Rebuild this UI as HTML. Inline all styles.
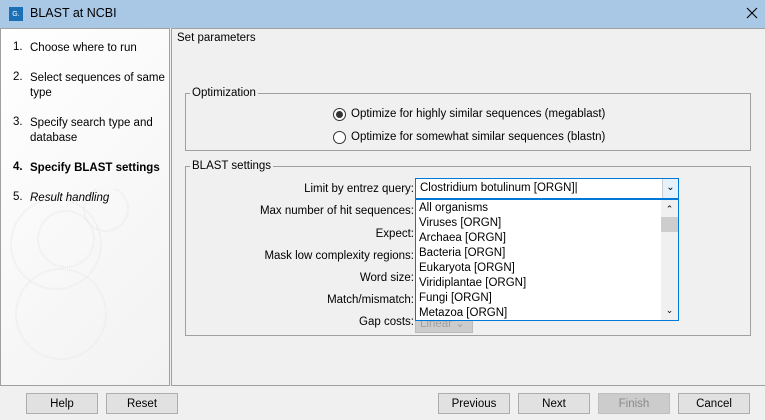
<!DOCTYPE html>
<html><head><style>
*{box-sizing:border-box;margin:0;padding:0}
body{width:765px;height:420px;background:#f0f0f0;font-family:"Liberation Sans","DejaVu Sans",sans-serif;font-size:11.5px;color:#000;position:relative;overflow:hidden}
.a{position:absolute}
.title{left:0;top:0;width:765px;height:28px;background:#a8c8e6}
.left{left:0;top:28px;width:170px;height:358px;border:1px solid #a0a0a0;background:linear-gradient(135deg,#fff,#f2f2f2)}
.right{left:171px;top:28px;width:594px;height:358px;border-left:1px solid #a0a0a0;border-top:1px solid #a0a0a0;border-bottom:1px solid #a0a0a0}
.step{position:absolute;left:12px}
.step span{position:absolute;left:17px;width:140px;line-height:15px}
.grp{border:1px solid #a0a0a0}
.leg{background:#f0f0f0;padding:0 2px}
.btn{top:393px;width:72px;height:21px;border:1px solid #adadad;background:#e1e1e1;text-align:center;line-height:21px}
.lbl{right:351px;text-align:right;white-space:nowrap}
.radio{width:13px;height:13px;border:1px solid #333;border-radius:50%;background:#fff}
</style></head><body>
<div class="a title">
 <div class="a" style="left:9px;top:7px;width:14px;height:14px;background:#1a6fb5;color:#fff;font-size:7px;line-height:16px;text-align:center">G.</div>
 <div class="a" style="left:30px;top:6px;font-size:12.5px">BLAST at NCBI</div>
 <svg class="a" style="left:746px;top:7px" width="12" height="12"><path d="M1 1L11 11M11 1L1 11" stroke="#000" stroke-width="1.1"/></svg>
</div>
<div class="a left">
 <svg class="a" style="left:0;top:160px" width="170" height="200" viewBox="0 0 170 200" fill="none" stroke="#ebebeb" stroke-width="2" stroke-dasharray="1 1"><circle cx="55" cy="55" r="45"/><circle cx="65" cy="50" r="28"/><circle cx="60" cy="125" r="45"/><circle cx="105" cy="20" r="22"/></svg>
 <div class="step" style="top:12px">1.<span style="top:0">Choose where to run</span></div>
 <div class="step" style="top:42px">2.<span style="top:0">Select sequences of same type</span></div>
 <div class="step" style="top:87px">3.<span style="top:0">Specify search type and database</span></div>
 <div class="step" style="top:132px;font-weight:bold">4.<span style="top:0">Specify BLAST settings</span></div>
 <div class="step" style="top:162px">5.<span style="top:0;font-style:italic">Result handling</span></div>
</div>
<div class="a right"></div>
<div class="a" style="left:177px;top:32px">Set parameters</div>
<div class="a grp" style="left:185px;top:93px;width:566px;height:58px"></div>
<div class="a leg" style="left:190px;top:87px">Optimization</div>
<div class="a radio" style="left:333px;top:108px"><div class="a" style="left:2px;top:2px;width:7px;height:7px;border-radius:50%;background:#333"></div></div>
<div class="a" style="left:351px;top:108px">Optimize for highly similar sequences (megablast)</div>
<div class="a radio" style="left:333px;top:131px"></div>
<div class="a" style="left:351px;top:131px">Optimize for somewhat similar sequences (blastn)</div>
<div class="a grp" style="left:185px;top:166px;width:566px;height:170px"></div>
<div class="a leg" style="left:190px;top:160px">BLAST settings</div>
<div class="a lbl" style="top:183px">Limit by entrez query:</div>
<div class="a lbl" style="top:205px">Max number of hit sequences:</div>
<div class="a lbl" style="top:228px">Expect:</div>
<div class="a lbl" style="top:250px">Mask low complexity regions:</div>
<div class="a lbl" style="top:272px">Word size:</div>
<div class="a lbl" style="top:294px">Match/mismatch:</div>
<div class="a lbl" style="top:316px">Gap costs:</div>
<div class="a" style="left:415px;top:315px;width:58px;height:18px;background:#ccc;border:1px solid #bbb;color:#a0a0a0;padding-left:4px;line-height:16px">Linear ⌄</div>
<div class="a" style="left:415px;top:178px;width:264px;height:21px;border:1px solid #0078d7;background:#fff;padding-left:4px;line-height:19px">Clostridium botulinum [ORGN]|
 <div class="a" style="right:0;top:0;width:16px;height:19px;border-left:1px solid #ccc;background:#e5f1fb;text-align:center;line-height:17px;font-size:10px">⌄</div></div>
<div class="a" style="left:415px;top:199px;width:264px;height:122px;border:1px solid #0078d7;background:#fff;line-height:15px;padding:1px 0 0 3px">
 All organisms<br>Viruses [ORGN]<br>Archaea [ORGN]<br>Bacteria [ORGN]<br>Eukaryota [ORGN]<br>Viridiplantae [ORGN]<br>Fungi [ORGN]<br>Metazoa [ORGN]
 <div class="a" style="right:0;top:0;width:17px;height:120px;background:#f0f0f0"><div class="a" style="left:0;top:2px;width:17px;text-align:center;font-size:9px">⌃</div><div class="a" style="left:0;top:17px;width:17px;height:15px;background:#cdcdcd"></div><div class="a" style="left:0;bottom:2px;width:17px;text-align:center;font-size:9px">⌄</div></div>
</div>
<div class="a btn" style="left:26px">Help</div>
<div class="a btn" style="left:106px">Reset</div>
<div class="a btn" style="left:438px">Previous</div>
<div class="a btn" style="left:518px">Next</div>
<div class="a btn" style="left:598px;background:#ccc;border-color:#bfbfbf;color:#8a8a8a">Finish</div>
<div class="a btn" style="left:678px">Cancel</div>
</body></html>
